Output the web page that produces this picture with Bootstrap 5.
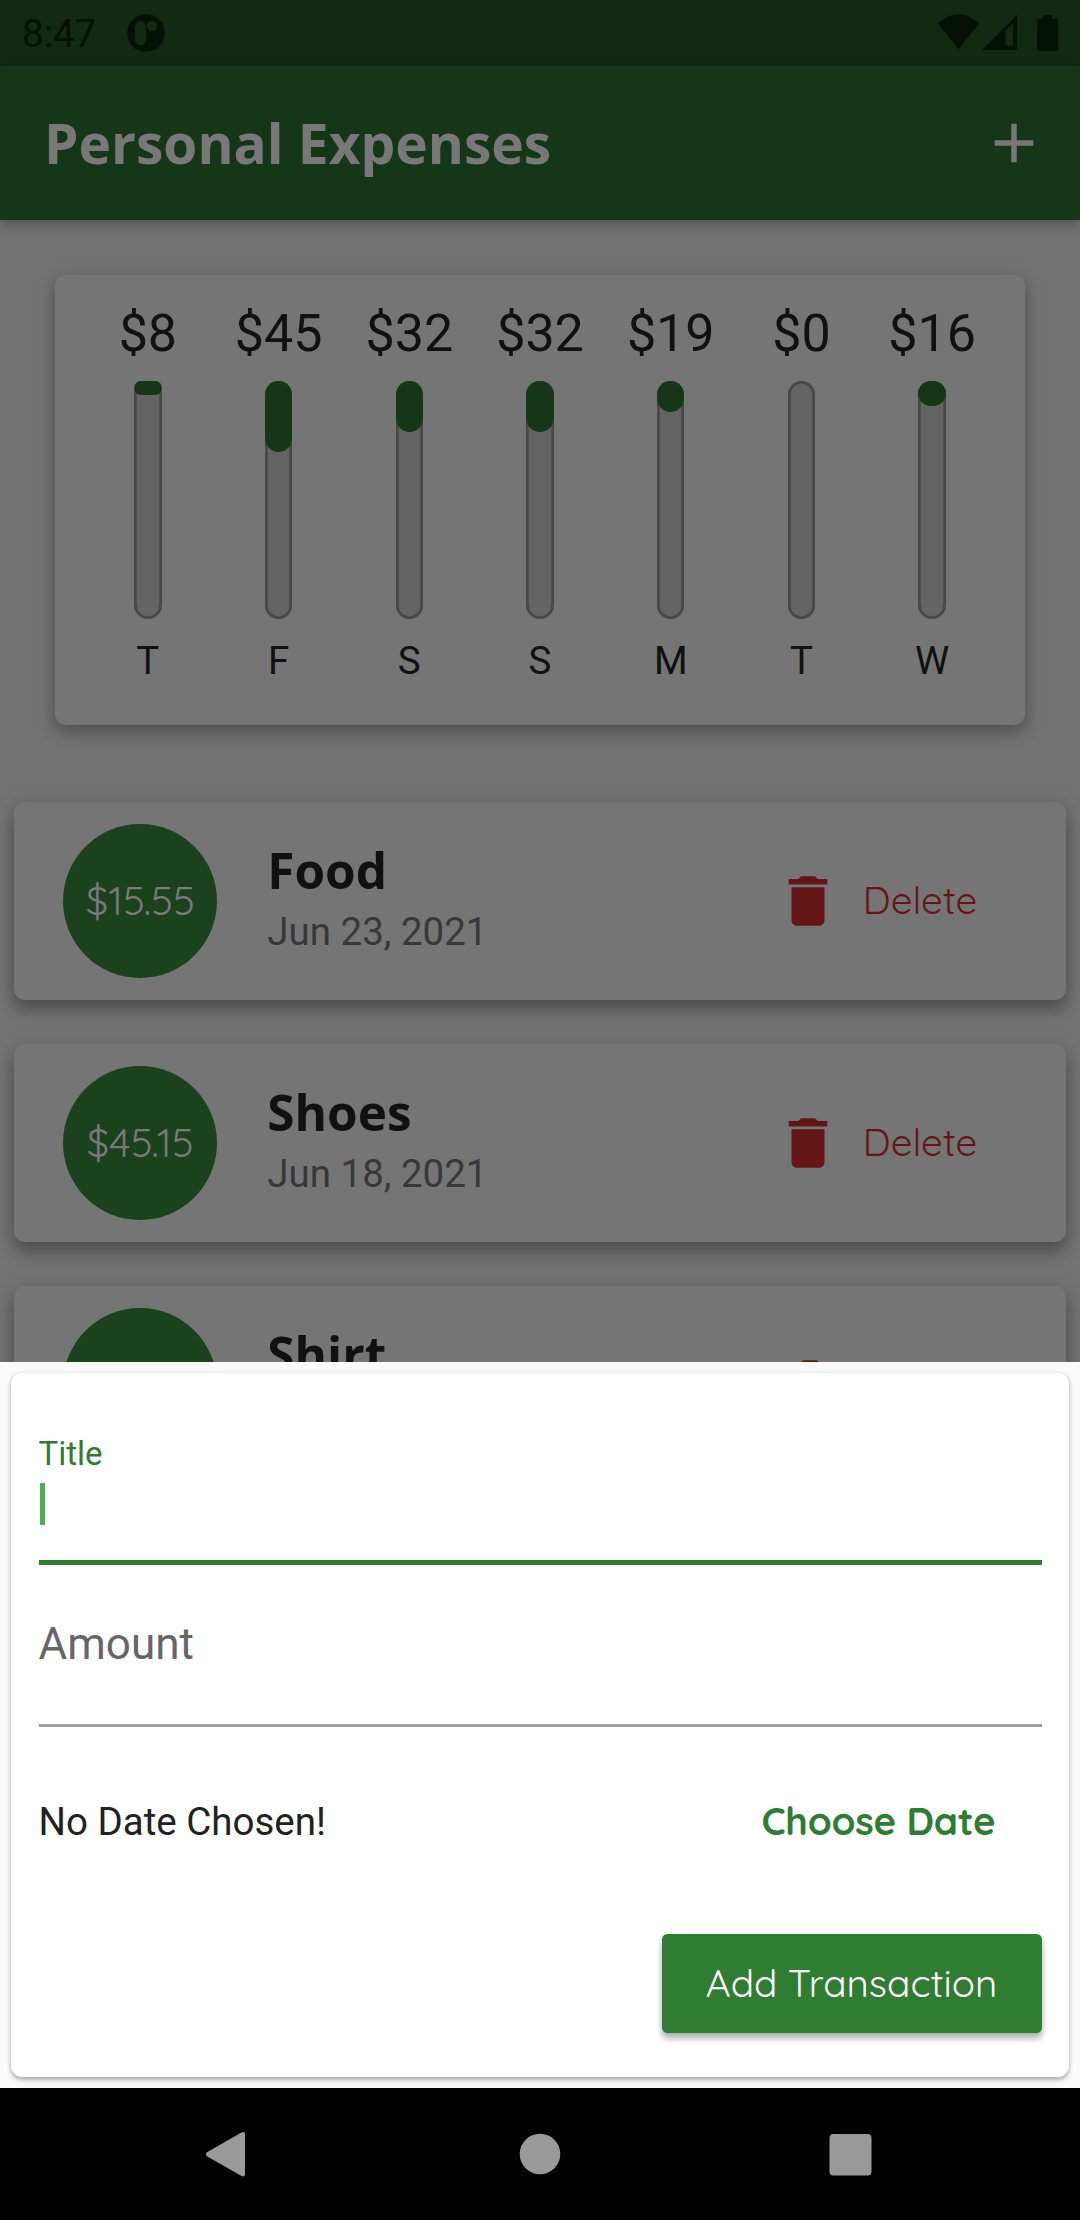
<!DOCTYPE html>
<html lang="en">
<head>
<meta charset="utf-8">
<meta name="viewport" content="width=device-width, initial-scale=1">
<title>Personal Expenses</title>
<link href="https://cdn.jsdelivr.net/npm/bootstrap@5.3.0/dist/css/bootstrap.min.css" rel="stylesheet">
<style>
  body { font-family: Roboto, sans-serif; font-size: 38.5px; color: #111; background: #000; }
  .phone { width: 1080px; height: 2220px; background: #737373; }
  .quick { font-family: Quicksand, Lato, sans-serif; }
  .heading { font-family: "Open Sans", sans-serif; font-weight: 700; }

  .statusbar { height: 66px; background: #122912; color: #051006; padding: 0 22px; line-height: 69px; }
  .statusbar .notif { margin-left: 31px; }
  .appbar { height: 154px; background: #163717; color: #787878; padding: 0 33px 0 44px; box-shadow: 0 4px 12px rgba(0,0,0,.3); z-index: 1; }
  .appbar .heading { font-size: 55px; line-height: 66px; }

  .page { height: 1142px; }
  .chart { margin: 55px 55px 0; height: 450px; padding: 31px 27.5px 0; background: #757575; border-radius: 11px;
           box-shadow: 0 8px 16px rgba(0,0,0,.22), 0 3px 22px rgba(0,0,0,.13); }
  .chart .sum { font-size: 52px; line-height: 55px; margin-bottom: 20px; }
  .track { width: 27.5px; height: 238px; border-radius: 14px; background: #646464; box-shadow: inset 0 0 0 2.75px #484848; }
  .fill { background: #163717; border-radius: 14px; }
  .chart .day { line-height: 55px; margin-top: 14px; }

  .tx-list { margin: 77px 13.75px 0; gap: 44px; }
  .tx { height: 198px; padding: 0 89px 0 49.5px; background: #757575; border-radius: 11px;
        box-shadow: 0 10px 16px rgba(0,0,0,.27), 0 3px 22px rgba(0,0,0,.13); }
  .amount { width: 154px; height: 154px; background: #1b411d; color: #7a7a7a; margin-right: 50px; font-size: 40px; padding-bottom: 2px; }
  .tx .name { font-size: 49.5px; line-height: 60px; margin-bottom: 7px; }
  .tx .when { line-height: 50px; color: #383838; }
  .tx .info { padding-bottom: 5px; }
  .del { color: #641616; gap: 22px; }
  .del span { min-width: 112px; padding-bottom: 2px; }

  .sheet { height: 726px; background: #fafafa; padding: 11px; }
  .form-card { height: 704px; background: #fff; border-radius: 11px; padding: 0 27.5px;
               box-shadow: 0 3px 4px rgba(0,0,0,.28), 0 0 4px rgba(0,0,0,.12); color: #212121; }
  .f-title { height: 192px; border-bottom: 5px solid #2e7d32; padding-top: 53px; }
  .f-title label { font-size: 33px; line-height: 55px; color: #2e7d32; display: block; }
  .caret { width: 5.5px; height: 42px; background: #4caf50; margin-top: 2px; margin-left: 1px; }
  .f-amount { height: 161.5px; border-bottom: 3px solid #9e9e9e; padding-top: 52px; font-size: 44px; line-height: 55px; color: #666; }
  .date-row { margin-top: 62px; height: 66px; padding-right: 46px; }
  .date-row .quick { color: #2e7d32; font-weight: 700; letter-spacing: -.25px; padding-bottom: 2px; }
  .btn-add { width: 380px; height: 99px; margin-top: 79px; background: #2f7d32; color: #fff; border-radius: 5.5px;
             box-shadow: 0 6px 6px rgba(0,0,0,.24), 0 2px 6px rgba(0,0,0,.14); }

  .navkeys { height: 132px; background: #000; }
</style>
<script src="https://cdn.jsdelivr.net/npm/bootstrap@5.3.0/dist/js/bootstrap.bundle.min.js"></script>
</head>
<body class="m-0">
<svg class="d-none">
  <symbol id="trash" viewBox="0 0 24 24"><path d="M6 19c0 1.1.9 2 2 2h8c1.1 0 2-.9 2-2V7H6v12zM19 4h-3.5l-1-1h-5l-1 1H5v2h14V4z" fill="currentColor"/></symbol>
</svg>
<div class="phone d-flex flex-column overflow-hidden">
  <header class="statusbar d-flex align-items-center flex-shrink-0">
    <span>8:47</span>
    <svg class="notif" width="38" height="38" viewBox="0 0 38 38"><circle cx="19" cy="19" r="18.8" fill="#051006"/><rect x="8" y="7" width="11" height="24" rx="5.5" fill="#122912"/><circle cx="25" cy="12" r="5.2" fill="#122912"/></svg>
    <svg class="ms-auto" width="120" height="38" viewBox="0 0 120 38" fill="#051006">
      <path d="M0 9.500Q20.500 -9 41 9.500L20.500 35z"/>
      <path fill-rule="evenodd" d="M44 36 79 1V36zM67.500 17V31.500H75V9.500z"/>
      <path d="M105 1h9v4h4.500q1.500 0 1.500 1.500V35q0 2-2 2H101q-2 0-2-2V6.500q0-1.500 1.500-1.500h4.500z"/>
    </svg>
  </header>
  <nav class="appbar d-flex align-items-center justify-content-between flex-shrink-0 position-relative">
    <span class="heading">Personal Expenses</span>
    <svg width="66" height="66" viewBox="0 0 24 24" fill="currentColor"><path d="M19 13h-6v6h-2v-6H5v-2h6V5h2v6h6v2z"/></svg>
  </nav>

  <main class="page overflow-hidden flex-shrink-0">
    <section class="chart d-flex text-center">
      <div class="col d-flex flex-column align-items-center"><div class="sum">$8</div><div class="track"><div class="fill" style="height:13.5px"></div></div><div class="day">T</div></div>
      <div class="col d-flex flex-column align-items-center"><div class="sum">$45</div><div class="track"><div class="fill" style="height:70.7px"></div></div><div class="day">F</div></div>
      <div class="col d-flex flex-column align-items-center"><div class="sum">$32</div><div class="track"><div class="fill" style="height:50.7px"></div></div><div class="day">S</div></div>
      <div class="col d-flex flex-column align-items-center"><div class="sum">$32</div><div class="track"><div class="fill" style="height:50.7px"></div></div><div class="day">S</div></div>
      <div class="col d-flex flex-column align-items-center"><div class="sum">$19</div><div class="track"><div class="fill" style="height:30.7px"></div></div><div class="day">M</div></div>
      <div class="col d-flex flex-column align-items-center"><div class="sum">$0</div><div class="track"></div><div class="day">T</div></div>
      <div class="col d-flex flex-column align-items-center"><div class="sum">$16</div><div class="track"><div class="fill" style="height:25px"></div></div><div class="day">W</div></div>
    </section>
    <section class="tx-list d-flex flex-column">
      <article class="tx d-flex align-items-center">
        <div class="amount quick rounded-circle d-flex align-items-center justify-content-center">$15.55</div>
        <div class="info"><div class="name heading">Food</div><div class="when">Jun 23, 2021</div></div>
        <div class="del quick d-flex align-items-center ms-auto"><svg width="66" height="66"><use href="#trash"/></svg><span>Delete</span></div>
      </article>
      <article class="tx d-flex align-items-center">
        <div class="amount quick rounded-circle d-flex align-items-center justify-content-center">$45.15</div>
        <div class="info"><div class="name heading">Shoes</div><div class="when">Jun 18, 2021</div></div>
        <div class="del quick d-flex align-items-center ms-auto"><svg width="66" height="66"><use href="#trash"/></svg><span>Delete</span></div>
      </article>
      <article class="tx d-flex align-items-center">
        <div class="amount rounded-circle"></div>
        <div class="info"><div class="name heading">Shirt</div><div class="when">&nbsp;</div></div>
        <div class="del quick d-flex align-items-center ms-auto"><svg width="66" height="66"><use href="#trash"/></svg><span></span></div>
      </article>
    </section>
  </main>

  <section class="sheet flex-shrink-0">
    <div class="form-card">
      <div class="f-title"><label>Title</label><div class="caret"></div></div>
      <div class="f-amount">Amount</div>
      <div class="date-row d-flex align-items-center justify-content-between"><span>No Date Chosen!</span><span class="quick">Choose Date</span></div>
      <button class="btn-add quick border-0 d-flex align-items-center justify-content-center ms-auto p-0">Add Transaction</button>
    </div>
  </section>

  <footer class="navkeys flex-shrink-0">
    <svg class="d-block" width="1080" height="132" fill="#999"><path d="M206.500 64.500 241.500 44.500Q245 43 245 46V86Q245 89.500 241.500 88L206.500 68Q205 66 206.500 64.500z"/><circle cx="540" cy="66" r="20.300"/><rect x="829.500" y="46" width="42" height="41.500" rx="4"/></svg>
  </footer>
</div>
</body>
</html>
